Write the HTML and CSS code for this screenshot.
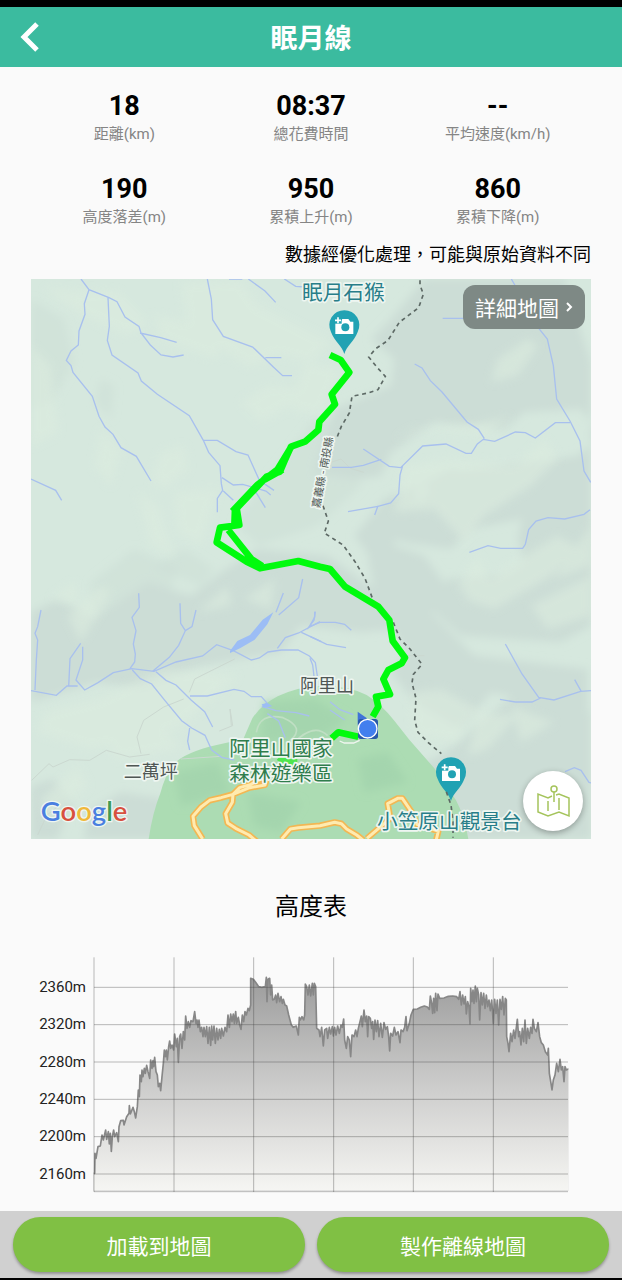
FILE: index.html
```
<!DOCTYPE html>
<html lang="zh-Hant">
<head>
  <meta charset="UTF-8">
  <meta name="viewport" content="width=device-width, initial-scale=1">
  <title>眠月線</title>
  <link rel="stylesheet" href="styles.css">
</head>
<body>

<header class="header">
  <a class="header_back" href="#" aria-label="返回">
    <svg viewBox="0 0 20 30"><path d="M17 2L4 15l13 13"/></svg>
  </a>
  <h1 class="header_title">眠月線</h1>
</header>

<main class="main">
  <dl class="stats">
    <div class="stat"><dt>距離(km)</dt><dd>18</dd></div>
    <div class="stat"><dt>總花費時間</dt><dd>08:37</dd></div>
    <div class="stat"><dt>平均速度(km/h)</dt><dd>--</dd></div>
    <div class="stat"><dt>高度落差(m)</dt><dd>190</dd></div>
    <div class="stat"><dt>累積上升(m)</dt><dd>950</dd></div>
    <div class="stat"><dt>累積下降(m)</dt><dd>860</dd></div>
  </dl>
  <p class="note">數據經優化處理，可能與原始資料不同</p>

  <div class="map">
    <svg class="map_canvas" viewBox="0 0 1680 1680">
      <defs>
        <filter id="soft"><feGaussianBlur stdDeviation="13"/></filter>
        <clipPath id="frame"><rect width="1680" height="1680"/></clipPath>
        <g id="pin">
          <path fill="#21a2b3" d="M0 2C-6-22-30-36-40-64A45 45 0 1 1 40-64C30-36 6-22 0 2z"/>
          <path fill="#fff" d="M-27-95h15l6-8h18l6 8h9v37h-54z"/>
          <circle r="12" cy="-78" cx="3" fill="#21a2b3"/>
          <path fill="#21a2b3" d="M-30-109h22v20h-22z"/>
          <path class="pin_plus" d="M-19-108v18M-28-99h18"/>
        </g>
      </defs>

      <g clip-path="url(#frame)">
      <rect width="1680" height="1680" fill="#d6e8de"/>

      <!-- terrain shading -->
      <g class="shade" filter="url(#soft)">
        <path d="M1180 0h420l80 250v340l-150 40-60 90-150 30-60 60-140-20-70-30 220-180 170-20 200-30 70-60-60-80-170 10-60 50-120-10-90-10-130 90-30 70-70 10-130-20 60-190 170-70 10-80-70-60 60-60z"/>
        <path d="M1060 660l100-40-20 120-110 110-60-80z"/>
        <path d="M1500 600l180-60v500l-90 50-300-20-90-80 50-90 170-10 60-40-20-70z"/>
        <path d="M1000 770l180 60 80 110-60 60 130 130 340 40v130l-290-60-90 110-140-80-70-90 50-60-90-130z"/>
        <path d="M1240 1420l220-180 220 60v380h-460l-110-190z"/>
        <path d="M0 1000l80-40 110 60 160-110 130 40 90-70 110-70 210 20 170 120 50 100-120 10-180-20-60 80-240 40-180 70-130-20-200 60z"/>
        <path d="M180 910l130-100 130 60-60 180-190 0z" opacity=".5"/>
        <path d="M0 60l100 60 30 130-70 120-60 20z" opacity=".5"/>
        <path d="M850 420l130 10-30 60 40 130-130 120-180 60-70-70z" opacity=".5"/>
        <path d="M0 1520l70-20 50 70-40 110H0zM170 1600l100-60 200 30-60 110H160z"/>
        <path d="M1170 620l90-50 70 20-110 50zM1270 120l190-20 110 60-220 40z"/>
        <path d="M210 300l40 20-10 100-50-50zM520 920l50 50-10 110-60-60zM370 860l90-50 90 60-40 50z" opacity=".5"/>
      </g>
      <g class="lift" filter="url(#soft)">
        <path d="M40 30l220 10 90 90-60 40-150-70zM370 110l240 40-60 90-160-60zM450 10l180-4 140 200-110 60-190-120z"/>
        <path d="M640 60l260 130-60 60-220-50zM710 320l150 10-170 100-60-60z"/>
        <path d="M390 520l70-20 10 70-70 60-40-30zM320 640l60 40 50 150-70-30zM430 640l130-10-50 170-70-40zM210 450l60 60-30 110-50-60z"/>
        <path d="M1120 560l150-20 180 20 90-80 40 60-80 80-140 90-60 80-90-100-120 10z"/>
        <path d="M1090 480l90-30 180 20 80-60-120 30-170 10zM1400 240l90-60 30 20-60 90-80 20z"/>
        <path d="M1430 860l150-90 70 40-90 80-170 100-90-30zM1280 920l60-90 40 80-50 60zM1500 980l180-90v120l-130 40z"/>
        <path d="M1140 1240l90-10 110 60-60 100-130-20zM1340 1300l120 10-90 100-60 20zM1440 1280l130 50-100 60z"/>
        <path d="M110 1010l100-90 30 20-90 150zM60 960l70-50 10 60zM500 1000l90-80 10 60zM640 960l90-60-10 90z"/>
        <path d="M40 1300l160-40 200-90 220 20-180 160-260 60-160-50zM230 1400l160-60 60 70-190 30zM30 1560l110-100 30 60-120 110z"/>
        <path d="M0 200l60 60 20 200-80 40zM820 250l110 20-60 140-90-20zM1570 900l110-160v120z"/>
      </g>

      <!-- forest park -->
      <path fill="#acdcb3" d="M353 1680Q365 1600 388 1543 402 1490 425 1458 460 1420 557 1398L637 1380 664 1318Q690 1278 740 1252 800 1222 880 1220 960 1222 1007 1248 1050 1275 1090 1325L1135 1382 1210 1468 1275 1564Q1300 1610 1312 1680z"/>
      <g class="park-shade" filter="url(#soft)">
        <path d="M700 1270l150-10 100 60-90 60-170 10zM430 1480l130-30 40 90-150 40zM980 1440l90-20 60 90-130 30zM650 1540l160 30-60 90-80-20z"/>
      </g>
      <path d="M676 1360q10-60 80-44 70 30 20 70M790 1390q60-60 100-20" fill="none" stroke="#c0dfc4" stroke-width="5"/>
      <g fill="none" stroke="#cbd8d0" stroke-width="3">
        <path d="M2 1504l52-50 12 10 50-22 60 2 50-30 70 20 60-8"/>
        <path d="M330 1424l-12-50 20-50 60-40 60-24M475 1240l16-40 60-30 60-30M565 1356l40-16-8-50M597 1290l4 50M20 1668l28-60 30-24"/>
        <path d="M870 560l60-20 28 28 40 12M1120 1130l60 0M450 1440l120-8"/>
      </g>

      <!-- roads -->
      <g class="road">
        <path id="road" d="M515 1680l-25-40-4-28 24-28 26-20 34-8 36-10 50-20 46-8 4-14-18-4-28 16-34 10-20 20-2 24-20 34 6 28 24 16 40 20 24 20M752 1680l26-30 24-4 65-6 44-10 20 4 16 16 30 18 20 16M1008 1678l70-60-8-44 30-16 14 0 30 44 14 34 30 10 34 10-6 26"/>
        <use href="#road" class="road_fill"/>
      </g>

      <!-- streams -->
      <g class="stream">
        <path d="M150 0l24 32 60 24 24 12 24 46 42 28 6 20 28 36 32 30 36 6 32-6M327 162l62 14 48 14M174 32l-14 42 2 32-18 50-2 42-22 18-14 28 14 16 6 20 58 72 20 60 18 32 24 22 24 40 46 26 44 74M231 56l4 86-6 42 14 44 78 54 10 24 48 40 96 64 42 74 16 36 34 40 4 54 4 20-16 24v42M517 484l42 0 56 34 36 10 34 76 44 30M573 596l34 22 28-2 70 20 14 12M577 636l30 28M675 640l28 46M529 0l12 60 4 62 32 50 88 32 62 60 28 26h28M703 236h48M652 0l50 36 32 34M760 0l34 22 28 2M594 0h40"/>
        <path d="M0 600l74 34 18 30"/>
        <g transform="translate(837 -12)">
          <path d="M604 12l20 35 60 110 28 35 18 80 10 100 40 66 30 60 12 90 20 34M398 130h90M314 267l22 12 25 38 35 34 75 90 34 22 18 28M780 443h-44l-60 46-30-16-30-2-62 28-34-6-18 14-18 28-16 0-60-28-70 6-66 65-34-4-78-52M214 553l-54 18-36 6-58 0M278 572l-8 28-4 56-24 28-38 10-90 16M204 692l-10 28M478 832l56-20 38 8 66 0 8-12 10-44 22-26 36-10 50 4 58-14 18-14"/>
        </g>
        <g transform="translate(-3 828)">
          <path d="M33 165l-10 50-8 20 8 20-4 60-4 90M3 407l76 14 32-28 32 0M152 265l-32 46-4 84M158 275l0 40-20 60 26 30 40-22 46-30 56-12 66 8 66-28 80-18 42-34 50 18 54 28 24-6 26-18 40-6 50 0 34 18 18 20 6 40M326 115l2 42-22 30 12 40-8 40 6 30-2 24-14 20M450 145l2 60 14 22-20 44-28 36-50 42M466 227l20-12 12-50M307 345l24 26 34 16 40 50 50 60 30 22 40 22 20 44 30 22 38 8M378 350l30 26 30 14 46 46 40 34 24 46M480 423l52 0 80-20 30 6 22 16 30 0 16 18-12 12 40 12 60 6 40 10M479 519l-6 40 6 26M738 172l22-58M746 180l60-52 12-56M742 280l24-32 40-14 64-34M814 232l60 28M832 222l20-26 4-26M712 476l34 22 20 50"/>
        </g>
        <g transform="translate(837 828)">
          <path d="M0 214l30-12 46 0 28 6 20 18M0 244l50 24 58 10M0 212l14-26v-16M0 310l8 20 4 34M586 267l50 90 50 70 46 8 80-26 32-2M570 433l46 8 50 0 26-12M794 374l20 36M765 650l28-12 20 8 24 36 8 2M60 440l30 24 40 15M60 465l44 30"/>
        </g>
      </g>
      <path fill="#9cbdf5" d="M597 1116l22-30 38-18 38-46 32-22-18 36-38 46-44 26-30 14zM692 1276l18-4 14 10-26 4z"/>

      <!-- county border -->
      <path class="border" d="M1167 4v14l10 28-14 40-58 44-34 54-38 26-20 24 26 32 24 26-22 40-30 10-48 10-8 50-24 40-14 36M876 680l16 46-12 36 56 36 36 50 30 50 26 70M1087 1030l20 50 30 30 36 46-26 30-4 26 12 46-4 66 10 36 30 30 40 34"/>

      <!-- recorded track -->
      <path class="track" d="M897 228l32 15 26 37-53 66 10 30-47 52-3 25-40 35-42 15-18 40-15 35-40 15-90 95 8 50-58 8-10 44 90 58 40 20 115-22 65 17 30 7 45 53 100 60 33 40 10 63 37 50-10 17-40 20-15 27 20 46-42 7 7 30-17 30M592 753l70 88 32 20M780 505l-40 66-60 46-76 80M755 572l-54 30M612 688l-2 54M982 1373l-60-13-20 18"/>
      <path d="M737 1443l10-12h20l10 8 22 0v14l-20 14-20-12z" fill="#4ee64e"/>
      <path d="M926 1386l14 6h28l18-8" fill="none" stroke="#f0f6f0" stroke-width="4"/>
      <path d="M980 1298l28 20-28 22z" fill="#4073d8"/>
      <rect x="981" y="1320" width="60" height="60" rx="8" fill="#2859a8"/>
      <circle cx="1010" cy="1349" r="28" fill="#427fee" stroke="#fff" stroke-width="4"/>

      <use href="#pin" x="940" y="223"/>
      <use href="#pin" x="1260" y="1564"/>
      <path class="border" d="M1246 1538l14 40 6 50v48"/>

      </g>

      <g class="label label-poi">
        <text x="937" y="62">眠月石猴</text>
        <text x="1255" y="1650">小笠原山觀景台</text>
      </g>
      <g class="label label-park">
        <text x="750" y="1430">阿里山國家</text>
        <text x="750" y="1506">森林遊樂區</text>
      </g>
      <g class="label label-town">
        <text x="888" y="1240">阿里山</text>
        <text x="359" y="1498">二萬坪</text>
      </g>
      <g class="label label-county">
        <text transform="translate(886 582) rotate(-79)">嘉義縣 - 南投縣</text>
      </g>
      <text class="google" x="29" y="1626"><tspan fill="#4a7fe0">G</tspan><tspan fill="#d8503f">o</tspan><tspan fill="#f0b93a">o</tspan><tspan fill="#4a7fe0">g</tspan><tspan fill="#3e9c55">l</tspan><tspan fill="#d8503f">e</tspan></text>
    </svg>

    <button class="map_detail" type="button">詳細地圖
      <svg viewBox="0 0 8 12"><path d="M2 2l4 4-4 4"/></svg>
    </button>
    <button class="map_layer" type="button" aria-label="切換地圖">
      <svg viewBox="0 0 34 34">
        <path d="M16 12L12 14 2 10v18l10 4 11-4 10 4V14l-10-4-3 1M12 17v10M23 14v12M18 8v10"/>
        <circle cx="18" cy="5" r="3"/>
      </svg>
    </button>
  </div>

  <h2 class="chart_title">高度表</h2>
  <svg class="chart" viewBox="33 45 1680 720" role="img" aria-label="高度表">
    <defs>
      <linearGradient id="height" gradientUnits="userSpaceOnUse" x1="0" y1="110" x2="0" y2="755">
        <stop offset="0" stop-color="#9c9c9c"/>
        <stop offset=".55" stop-color="#d0d0cf"/>
        <stop offset="1" stop-color="#f6f6f3"/>
      </linearGradient>
      <clipPath id="plot"><rect x="221" y="45" width="1424" height="707"/></clipPath>
    </defs>
    <path class="chart_area" clip-path="url(#plot)" d="M218 755V700L224 700 225 640 228 655 234 620 241 618 246 585 250 600 257 570 260 598 265 575 268 612 271 580 274 634 277 590 281 570 284 590 290 578 295 605 297 560 302 542 310 541 312 555 320 530 327 520 328 497 331 522 339 502 343 515 347 534 352 500 355 450 358 470 360 405 364 425 366 390 369 410 373 385 376 400 380 376 384 395 389 415 392 360 396 385 399 362 401 380 404 352 408 395 412 405 415 440 419 430 422 452 426 410 430 370 433 330 436 350 439 330 442 360 446 320 449 303 452 325 456 315 461 330 464 282 469 320 472 295 475 367 479 290 482 282 486 325 490 275 494 300 497 228 501 265 505 245 509 262 513 242 519 245 524 215 528 250 531 240 534 262 537 240 541 275 545 262 549 290 552 262 556 290 560 260 564 310 568 262 572 316 575 258 578 300 582 258 586 310 590 265 594 300 598 268 602 295 605 265 610 288 615 262 620 275 624 225 628 262 632 222 636 245 640 222 643 250 647 215 650 250 655 232 659 255 663 268 667 225 671 245 675 215 679 225 684 205 688 212 692 195 692 115 700 118 708 128 716 140 725 142 736 140 739 112 741 185 744 118 749 115 752 165 755 135 758 180 763 178 767 165 770 188 774 160 779 185 783 170 787 190 790 178 795 195 800 198 806 225 814 255 820 262 829 258 835 285 838 232 841 240 846 230 851 240 854 225 856 132 860 140 864 165 868 135 872 168 877 130 880 165 883 130 887 140 890 265 897 270 900 290 905 262 910 318 914 270 920 265 923 295 928 262 932 282 937 260 940 288 944 262 948 285 953 258 958 280 963 255 967 262 971 237 974 300 979 325 983 290 988 300 992 350 996 285 1002 290 1007 270 1011 290 1015 265 1020 245 1024 228 1027 260 1032 210 1036 245 1040 228 1043 290 1046 230 1051 235 1055 265 1058 245 1061 298 1065 240 1069 275 1073 242 1077 290 1082 250 1087 292 1092 248 1097 268 1102 260 1106 290 1109 333 1112 280 1118 288 1123 262 1128 285 1134 275 1140 308 1143 270 1149 275 1154 262 1158 230 1161 272 1168 250 1173 225 1180 208 1192 207 1202 202 1213 198 1222 201 1228 208 1231 168 1235 190 1238 220 1241 175 1244 218 1247 160 1251 212 1254 162 1259 175 1272 174 1285 169 1298 168 1310 170 1316 178 1320 155 1324 195 1328 165 1332 192 1336 170 1339 222 1343 185 1347 200 1350 252 1352 145 1356 185 1359 150 1362 190 1366 138 1369 185 1372 145 1376 165 1379 240 1383 158 1387 195 1391 160 1395 205 1399 165 1403 200 1407 180 1411 212 1415 180 1420 250 1424 178 1428 220 1432 180 1436 255 1440 178 1444 208 1448 170 1452 225 1456 175 1459 180 1460 290 1464 310 1467 335 1472 280 1476 305 1481 270 1485 295 1492 238 1496 290 1499 275 1503 315 1507 265 1511 305 1515 240 1519 310 1523 265 1528 295 1532 262 1536 280 1539 238 1543 265 1549 275 1554 248 1559 290 1564 308 1570 315 1576 335 1583 345 1585 325 1588 400 1593 430 1596 450 1600 420 1605 405 1610 370 1615 395 1620 358 1624 390 1628 380 1632 425 1635 380 1639 390 1649 385V755z"/>
    <path class="chart_grid" d="M222 142h1422M222 254h1422M222 366h1422M222 478h1422M222 590h1422M222 702h1422M222 755h1422M222 52v704M462 52v704M701 52v704M941 52v704M1180 52v704M1420 52v704"/>
    <g class="chart_scale">
      <text x="198" y="156">2360m</text>
      <text x="198" y="268">2320m</text>
      <text x="198" y="380">2280m</text>
      <text x="198" y="492">2240m</text>
      <text x="198" y="604">2200m</text>
      <text x="198" y="716">2160m</text>
    </g>
  </svg>
</main>

<footer class="actions">
  <button type="button">加載到地圖</button>
  <button type="button">製作離線地圖</button>
</footer>

</body>
</html>
```

FILE: styles.css
```
* {
  box-sizing: border-box;
}
body {
  display: flex;
  flex-direction: column;
  min-height: 100vh;
  margin: 0;
  border-top: 7px solid #000;
  border-bottom: 2px solid #000;
  background-color: #fafafa;
  color: #000;
  font-family: Roboto, "Noto Sans CJK TC", sans-serif;
}
button {
  border: none;
  font-family: inherit;
  color: #fff;
  cursor: pointer;
}

.header {
  display: grid;
  grid-template-columns: 60px 1fr 60px;
  align-items: center;
  height: 60px;
  background-color: #3bbb9f;
}
.header_back {
  padding-left: 20px;
}
.header_back svg {
  display: block;
  width: 20px;
  height: 30px;
  fill: none;
  stroke: #fff;
  stroke-width: 5;
}
.header_title {
  margin: 0;
  padding-top: 4px;
  color: #fff;
  font-size: 27px;
  font-weight: 700;
  line-height: 40px;
  text-align: center;
}

.main {
  flex: 1;
  padding: 23px 31px 16px;
}
.stats {
  display: grid;
  grid-template-columns: repeat(3, 1fr);
  row-gap: 27px;
  margin: 0;
  text-align: center;
}
.stat {
  display: flex;
  flex-direction: column-reverse;
}
.stat dt {
  color: #858585;
  font-size: 15px;
  line-height: 24px;
}
.stat dd {
  margin: 0;
  font-size: 27px;
  font-weight: 700;
  line-height: 32px;
}
.note {
  margin: 12px 0 11px;
  font-size: 18px;
  line-height: 27px;
  text-align: right;
}

.map {
  position: relative;
}
.map_canvas {
  display: block;
  width: 100%;
  overflow: visible;
}
.shade {
  fill: #ccddd6;
}
.lift {
  fill: #dcecdf;
  opacity: .6;
}
.park-shade {
  fill: #a4d5ae;
}
.road {
  fill: none;
  stroke: #f3b753;
  stroke-width: 19;
  stroke-linejoin: round;
}
.road_fill {
  stroke: #ffebb0;
  stroke-width: 9;
}
.stream {
  fill: none;
  stroke: #a8c0ee;
  stroke-width: 4;
}
.border {
  fill: none;
  stroke: #5d6965;
  stroke-width: 5;
  stroke-dasharray: 12 11;
}
.track {
  fill: none;
  stroke: #00fb0d;
  stroke-width: 20;
  stroke-linejoin: round;
}
.pin_plus {
  fill: none;
  stroke: #fff;
  stroke-width: 5;
}
.label {
  font-family: "Noto Sans CJK TC", sans-serif;
  text-anchor: middle;
  paint-order: stroke;
  stroke: #eef6f1;
  stroke-width: 10;
  stroke-linejoin: round;
}
.label-poi {
  fill: #287e89;
  font-size: 62px;
}
.label-park {
  fill: #2f7d4c;
  font-size: 62px;
}
.label-town {
  fill: #4f5654;
  font-size: 54px;
}
.label-county {
  fill: #4f5654;
  font-size: 32px;
}
.google {
  font-family: Lato, sans-serif;
  font-size: 82px;
  font-weight: 600;
  paint-order: stroke;
  stroke: #eef6f1;
  stroke-width: 8;
}
.map_detail {
  position: absolute;
  top: 6px;
  right: 6px;
  display: flex;
  align-items: center;
  gap: 6px;
  height: 44px;
  padding: 0 12px;
  border-radius: 12px;
  background-color: #7e8985;
  font-size: 21px;
}
.map_detail svg {
  width: 8px;
  height: 12px;
  fill: none;
  stroke: #fff;
  stroke-width: 2;
}
.map_layer {
  position: absolute;
  right: 8px;
  bottom: 8px;
  width: 60px;
  height: 60px;
  padding: 13px;
  border-radius: 50%;
  background-color: #fff;
  box-shadow: 0 2px 6px rgba(0, 0, 0, .3);
}
.map_layer svg {
  display: block;
  width: 34px;
  height: 34px;
  fill: none;
  stroke: #a5c45c;
  stroke-width: 1.5;
}

.chart_title {
  margin: 50px 0 30px;
  font-size: 24px;
  font-weight: 400;
  line-height: 36px;
  text-align: center;
}
.chart {
  display: block;
  width: 100%;
}
.chart_area {
  fill: url(#height);
  stroke: #878787;
  stroke-width: 5;
  stroke-linejoin: round;
}
.chart_grid {
  fill: none;
  stroke: rgba(60, 60, 60, .35);
  stroke-width: 3;
}
.chart_scale {
  fill: #222;
  font-size: 45px;
  text-anchor: end;
}

.actions {
  display: grid;
  grid-template-columns: 1fr 1fr;
  gap: 12px;
  padding: 6px 13px;
  background-color: #d0d0d0;
}
.actions button {
  height: 55px;
  border-radius: 28px;
  background-color: #80c044;
  box-shadow: 0 2px 3px rgba(0, 0, 0, .3);
  font-size: 21px;
}
```
